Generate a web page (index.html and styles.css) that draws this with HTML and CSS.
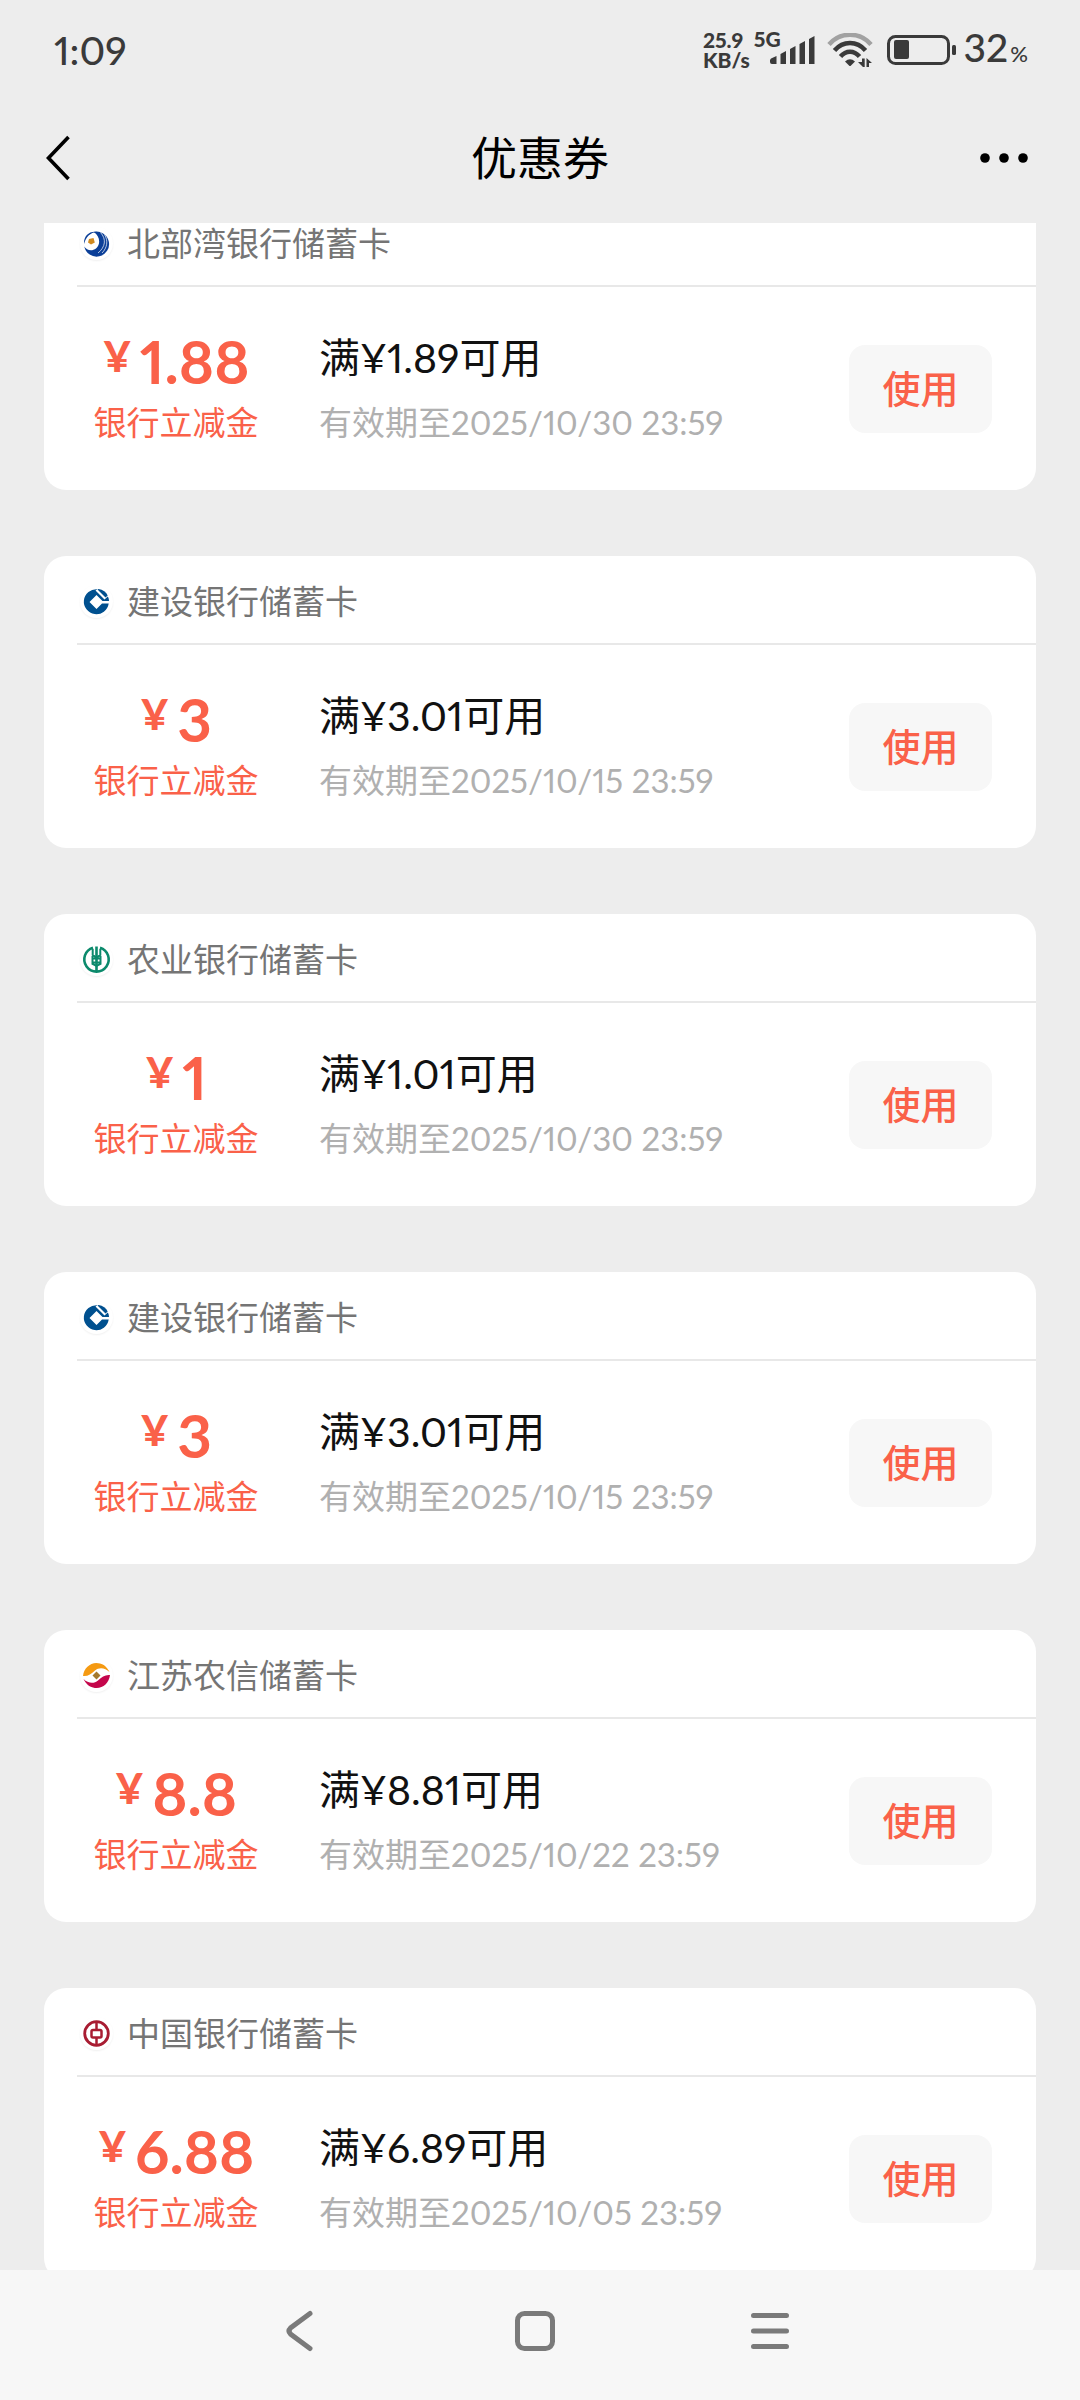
FILE: index.html
```html
<!DOCTYPE html>
<html lang="zh-CN">
<head>
<meta charset="utf-8">
<meta name="viewport" content="width=device-width, initial-scale=1">
<title>优惠券</title>
<link rel="stylesheet" href="styles.css">
</head>
<body>
<svg class="sprite" aria-hidden="true">
  <symbol id="logo-bbw" viewBox="0 0 33 33">
    <path d="M13.500 5A12.500 12.500 0 1 1 4.300 19.500C6.500 23.500 12 24.500 16 21.500C21 17.500 20 8.500 13.500 5Z" fill="#0b3f98"/>
    <path d="M4 17C3.500 8.500 10 3.500 17 5C10 5.500 6 10 4 17Z" fill="#0b3f98"/>
    <path d="M20.500 5.500C26.500 12 25.500 20 18 26M24.500 7.500C28.500 14 27 21 22 26" fill="none" stroke="#fff" stroke-width="0.700"/>
    <path d="M9 12L13.500 11L14.800 15.500L11 17.500L8 15.500Z" fill="#d08a20"/>
  </symbol>
  <symbol id="logo-ccb" viewBox="0 0 33 33">
    <path d="M17.500 4.200A12.500 12.500 0 1 0 28.700 18.500H22L16.500 24L9.500 17L16.500 10L22.500 16H29C29 14 28.500 13 27.800 11.500L24.500 14.500L15.500 5.500Z" fill="#00508f"/>
    <path d="M18.500 4C23 4.500 26 7 27.700 10.500L25.500 12.500L17.500 4.500Z" fill="#00508f"/>
  </symbol>
  <symbol id="logo-abc" viewBox="0 0 33 33">
    <g fill="none" stroke="#0c8a6c">
      <path d="M13 4.700A12.200 12.200 0 1 0 20 4.700" stroke-width="2.600"/>
      <path d="M16.500 3.500V29" stroke-width="2.600"/>
      <path d="M12.700 6V12L16.500 14.500L20.300 12V6M12 15.500H21M12 19.500H21M12.500 13V21L16.500 23L20.500 21V13" stroke-width="2"/>
    </g>
  </symbol>
  <symbol id="logo-jsnx" viewBox="0 0 33 33">
    <path d="M3 17C4 8 12 2 20 4.500C24 5.500 27 8 29.500 13C25 8.500 19 8 15 11.500C11 15 8 17.500 3 17Z" fill="#f59a12"/>
    <path d="M30 16C29 25 21 31 13 28.500C9 27.500 6 25 3.500 20C8 24.500 14 25 18 21.500C22 18 25 15.500 30 16Z" fill="#c4064b"/>
    <path d="M16.500 12.500L20.500 16.500L16.500 20.500L12.500 16.500Z" fill="#a5792e"/>
  </symbol>
  <symbol id="logo-boc" viewBox="0 0 33 33">
    <g fill="none" stroke="#a81c32">
      <circle cx="16.500" cy="16.500" r="11.800" stroke-width="2.800"/>
      <rect x="11.500" y="13" width="10" height="7.500" rx="1.500" stroke-width="2.500"/>
      <path d="M16.500 5V13M16.500 20.500V28" stroke-width="2.500"/>
    </g>
  </symbol>
</svg>

<header class="top">
  <div class="status">
    <time class="clock">1:09</time>
    <div class="indicators">
      <div class="speed"><span>25.9</span><span>KB/s</span></div>
      <span class="network">5G</span>
      <svg class="signal" viewBox="0 0 45 28" width="45" height="28" aria-label="信号">
        <path d="M0 24L1 22.500L6.500 20V28H2Q0 28 0 26ZM10.500 18L16 15V28H10.500ZM20 13L25.500 10V28H20ZM29.500 8L35 5V28H29.500ZM39 3L44.500 0V28H39Z"/>
      </svg>
      <svg class="wifi" viewBox="0 0 46 34" width="46" height="34" aria-label="无线网络">
        <path d="M2 11.500C13 -1.500 33 -1.500 44 11.500" fill="none" stroke="#a2a2a2" stroke-width="4.500"/>
        <path d="M7.500 17.500C16 7.500 30 7.500 38.500 17.500M13.500 23.500C19 17 27 17 32.500 23.500" fill="none" stroke="#3a3a3a" stroke-width="4.500"/>
        <path d="M18 28.500Q23 24 28 28.500L24 32.500Q23 33.500 22 32.500ZM35 25.500H37.700V34H36L31 29H35ZM39.500 25L45 30H42V34H39.500Z" fill="#3a3a3a"/>
      </svg>
      <svg class="battery" viewBox="0 0 70 30" width="70" height="30" aria-label="电量">
        <rect x="1.500" y="1.500" width="60" height="27" rx="7" fill="none" stroke="#3a3a3a" stroke-width="3"/>
        <rect x="7" y="5" width="15" height="19" rx="2"/>
        <rect x="65" y="10" width="4" height="10" rx="1.500"/>
      </svg>
      <span class="percent">32<small>%</small></span>
    </div>
  </div>
  <div class="titlebar">
    <button class="icon-button" aria-label="返回">
      <svg viewBox="0 0 26 48" width="26" height="48"><path d="M23.500 3L3.500 24L23.500 45" fill="none" stroke="#000" stroke-width="3.600"/></svg>
    </button>
    <h1 class="title">优惠券</h1>
    <button class="icon-button" aria-label="更多">
      <svg viewBox="0 0 56 12" width="56" height="12"><circle cx="6" cy="6" r="4.800"/><circle cx="25" cy="6" r="4.800"/><circle cx="44" cy="6" r="4.800"/></svg>
    </button>
  </div>
</header>

<main class="viewport">
  <ul class="coupons">
    <li class="card">
      <div class="bank"><svg class="logo"><use href="#logo-bbw"/></svg><span>北部湾银行储蓄卡</span></div>
      <div class="body">
        <div class="value"><div class="amount"><span class="yen">¥</span><span>1.88</span></div><div class="kind">银行立减金</div></div>
        <div class="info"><div class="rule">满¥1.89可用</div><div class="expiry">有效期至2025/10/30 23:59</div></div>
        <button class="use">使用</button>
      </div>
    </li>
    <li class="card">
      <div class="bank"><svg class="logo"><use href="#logo-ccb"/></svg><span>建设银行储蓄卡</span></div>
      <div class="body">
        <div class="value"><div class="amount"><span class="yen">¥</span><span>3</span></div><div class="kind">银行立减金</div></div>
        <div class="info"><div class="rule">满¥3.01可用</div><div class="expiry">有效期至2025/10/15 23:59</div></div>
        <button class="use">使用</button>
      </div>
    </li>
    <li class="card">
      <div class="bank"><svg class="logo"><use href="#logo-abc"/></svg><span>农业银行储蓄卡</span></div>
      <div class="body">
        <div class="value"><div class="amount"><span class="yen">¥</span><span>1</span></div><div class="kind">银行立减金</div></div>
        <div class="info"><div class="rule">满¥1.01可用</div><div class="expiry">有效期至2025/10/30 23:59</div></div>
        <button class="use">使用</button>
      </div>
    </li>
    <li class="card">
      <div class="bank"><svg class="logo"><use href="#logo-ccb"/></svg><span>建设银行储蓄卡</span></div>
      <div class="body">
        <div class="value"><div class="amount"><span class="yen">¥</span><span>3</span></div><div class="kind">银行立减金</div></div>
        <div class="info"><div class="rule">满¥3.01可用</div><div class="expiry">有效期至2025/10/15 23:59</div></div>
        <button class="use">使用</button>
      </div>
    </li>
    <li class="card">
      <div class="bank"><svg class="logo"><use href="#logo-jsnx"/></svg><span>江苏农信储蓄卡</span></div>
      <div class="body">
        <div class="value"><div class="amount"><span class="yen">¥</span><span>8.8</span></div><div class="kind">银行立减金</div></div>
        <div class="info"><div class="rule">满¥8.81可用</div><div class="expiry">有效期至2025/10/22 23:59</div></div>
        <button class="use">使用</button>
      </div>
    </li>
    <li class="card">
      <div class="bank"><svg class="logo"><use href="#logo-boc"/></svg><span>中国银行储蓄卡</span></div>
      <div class="body">
        <div class="value"><div class="amount"><span class="yen">¥</span><span>6.88</span></div><div class="kind">银行立减金</div></div>
        <div class="info"><div class="rule">满¥6.89可用</div><div class="expiry">有效期至2025/10/05 23:59</div></div>
        <button class="use">使用</button>
      </div>
    </li>
  </ul>
</main>

<nav class="system-nav" aria-label="系统导航">
  <button class="icon-button" aria-label="返回">
    <svg viewBox="0 0 48 48" width="48" height="48"><path d="M34 6.500L14.500 21Q11.500 24 14.500 27L34 41.500" fill="none" stroke="#7a7a7a" stroke-width="5" stroke-linecap="round"/></svg>
  </button>
  <button class="icon-button" aria-label="主屏幕">
    <svg viewBox="0 0 48 48" width="48" height="48"><rect x="6.500" y="6.500" width="35" height="35" rx="7" fill="none" stroke="#7a7a7a" stroke-width="5"/></svg>
  </button>
  <button class="icon-button" aria-label="最近任务">
    <svg viewBox="0 0 48 48" width="48" height="48"><path d="M7.500 8.500H40.500M7.500 24H40.500M7.500 39.500H40.500" fill="none" stroke="#7a7a7a" stroke-width="5" stroke-linecap="round"/></svg>
  </button>
</nav>
</body>
</html>
```

FILE: styles.css
```css
* {
  box-sizing: border-box;
}

body {
  margin: 0;
  height: 100vh;
  display: flex;
  flex-direction: column;
  background: #ededed;
  color: #111;
  font-family: Lato, "Noto Sans CJK SC", sans-serif;
  font-variant-numeric: proportional-nums;
}

.sprite {
  display: none;
}

button {
  margin: 0;
  padding: 0;
  border: 0;
  background: none;
  font: inherit;
}

.icon-button,
.icon-button svg {
  display: block;
}

/* Status bar and page title */
.status {
  display: flex;
  justify-content: space-between;
  align-items: center;
  height: 100px;
  padding: 0 52px 0 54px;
  color: #3a3a3a;
  fill: #3a3a3a;
}

.clock,
.percent {
  font-size: 39px;
  font-weight: 500;
  line-height: 48px;
}

.percent small {
  margin-left: 2px;
  font-size: 22px;
}

.indicators {
  display: flex;
  align-items: center;
}

.speed,
.network {
  font-size: 21px;
  font-weight: 900;
  line-height: 20px;
}

.speed {
  display: flex;
  flex-direction: column;
}

.network {
  align-self: flex-start;
  margin: 6px 0 0 4px;
}

.signal {
  margin-left: -11px;
}

.wifi {
  margin: 0 14px 0 12px;
}

.battery {
  margin-right: 7px;
}

.titlebar {
  display: grid;
  grid-template-columns: 1fr auto 1fr;
  align-items: center;
  height: 123px;
  padding: 0 45px 8px;
}

.titlebar .icon-button:last-child {
  justify-self: end;
}

.title {
  margin: 0;
  font-size: 46px;
  font-weight: 400;
  line-height: 60px;
  color: #000;
}

/* Coupon list, scrolled a little way down */
.viewport {
  flex: 1;
  min-height: 0;
  overflow: hidden;
}

.coupons {
  display: flex;
  flex-direction: column;
  gap: 66px;
  margin: -25px 44px 0;
  padding: 0;
  list-style: none;
}

.card {
  border-radius: 22px;
  background: #fff;
  overflow: hidden;
}

.bank {
  display: flex;
  align-items: center;
  gap: 14px;
  height: 89px;
  margin-left: 33px;
  padding: 3px 0 0 3px;
  border-bottom: 2px solid #e8e8e8;
  color: #757575;
  font-size: 33px;
  line-height: 48px;
}

.logo {
  width: 33px;
  height: 33px;
  border-radius: 50%;
  box-shadow: 0 1px 2px #f0f0f0;
}

.body {
  display: grid;
  grid-template-columns: 264px 1fr auto;
  align-items: center;
  column-gap: 11px;
  height: 203px;
  padding-right: 44px;
}

.value {
  display: flex;
  flex-direction: column;
  align-items: center;
  padding-bottom: 5px;
  color: #fa6149;
}

.amount {
  display: flex;
  gap: 8px;
  margin-bottom: 2px;
  font-size: 60px;
  font-weight: 700;
  line-height: 70px;
}

.yen {
  font-size: 42px;
  font-weight: 900;
  line-height: 60px;
}

.kind,
.expiry {
  font-size: 33px;
  line-height: 48px;
}

.info {
  padding-bottom: 5px;
}

.rule {
  margin-bottom: 8px;
  font-size: 41px;
  line-height: 64px;
}

.expiry {
  color: #b0b0b0;
}

.use {
  width: 143px;
  height: 88px;
  padding-bottom: 4px;
  border-radius: 16px;
  background: #f7f7f7;
  color: #fa6149;
  font-size: 38px;
  font-weight: 500;
}

/* Android navigation bar */
.system-nav {
  display: flex;
  justify-content: center;
  gap: 187px;
  padding: 37px 10px 45px 0;
  background: #f7f7f7;
}
```
